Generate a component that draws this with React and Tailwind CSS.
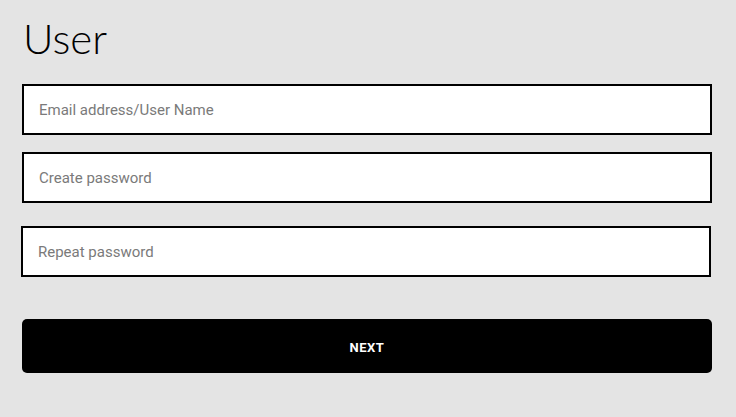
import React, { useState } from 'react';

function App() {
    const [email, setEmail] = useState("");
    const [password, setPassword] = useState("");
    const [repeat, setRepeat] = useState("");

    const inputClass = "block h-[51px] border-2 border-black bg-white px-[15px] text-[15px] text-black placeholder:text-[#7a7a7a] outline-none font-['Roboto',sans-serif]";

    return (
        <div className="min-h-[417px] w-full bg-[#e4e4e4] pl-[22px] pr-[24px] pt-[13px]">
            <h1 className="ml-[1px] text-[42px] font-light leading-[50px] text-black font-['Lato',sans-serif]">User</h1>
            <input
                className={`${inputClass} mt-[21px] w-[690px]`}
                placeholder="Email address/User Name"
                value={email}
                onChange={e => setEmail(e.target.value)}
            />
            <input
                type="password"
                className={`${inputClass} mt-[17px] w-[690px]`}
                placeholder="Create password"
                value={password}
                onChange={e => setPassword(e.target.value)}
            />
            <input
                type="password"
                className={`${inputClass} mt-[23px] -ml-[1px] w-[690px]`}
                placeholder="Repeat password"
                value={repeat}
                onChange={e => setRepeat(e.target.value)}
            />
            <button className="mt-[42px] flex h-[54px] w-[690px] items-center justify-center rounded-[5px] bg-black pt-[3px] text-[13px] font-bold tracking-[0.5px] text-white font-['Roboto',sans-serif]">
                NEXT
            </button>
        </div>
    );
}
export default App;
